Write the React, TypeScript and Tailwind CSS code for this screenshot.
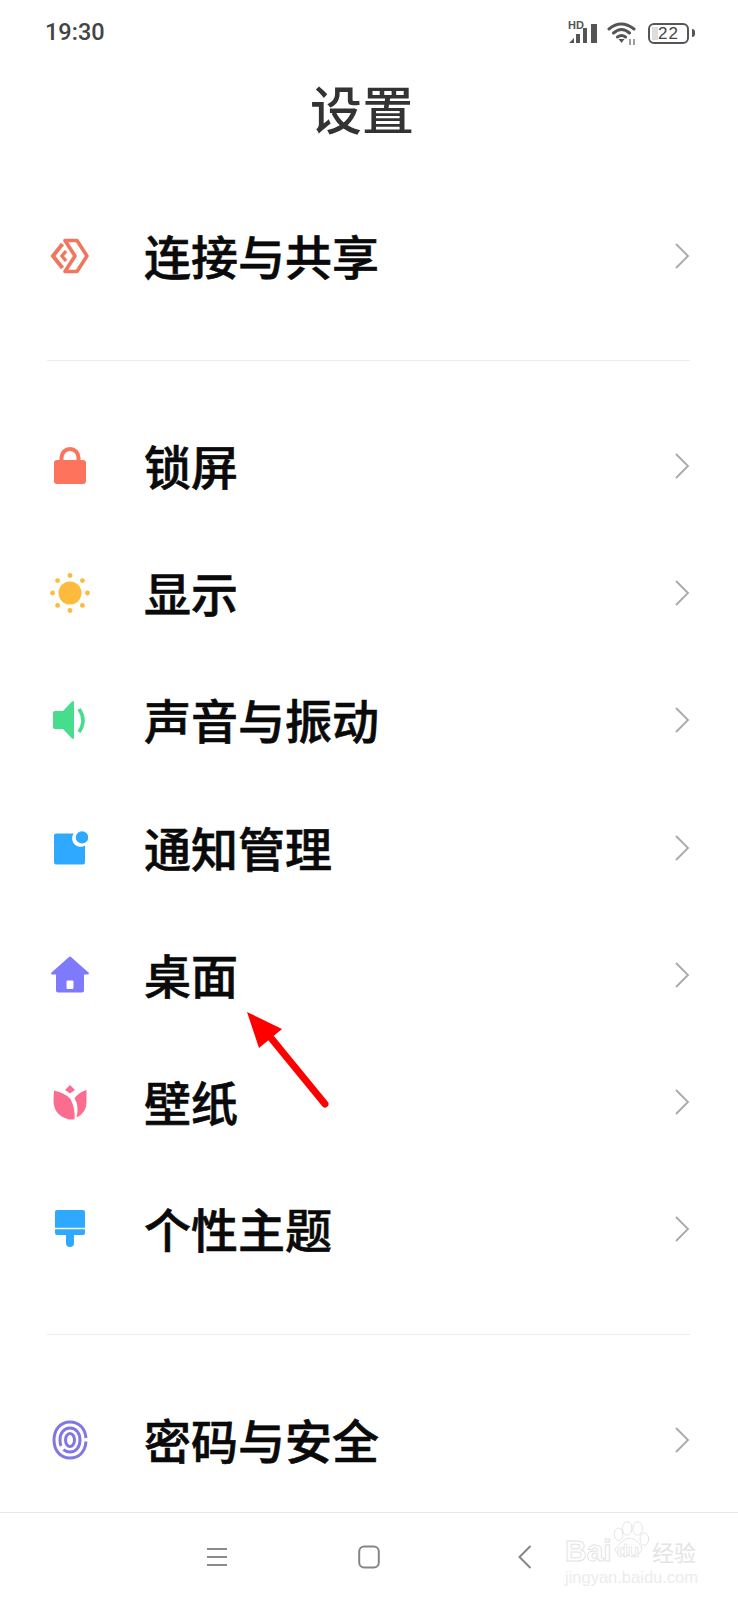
import type { ReactNode } from 'react';

const CJK = "font-['Noto_Sans_CJK_SC','Noto_Sans',sans-serif]";

function Chevron() {
  return (
    <svg width="16" height="28" viewBox="0 0 16 28" fill="none" className="shrink-0">
      <path d="M2 2 L14 14 L2 26" stroke="#a9a9a9" strokeWidth="1.8" />
    </svg>
  );
}

function Row({ icon, label }: { icon: ReactNode; label: string }) {
  return (
    <div className="flex items-center h-[127.2px] pl-[48px] pr-[48px]">
      <div className="w-[44px] h-[44px] flex items-center justify-center shrink-0">{icon}</div>
      <div className="ml-[52px] pb-[3px] flex-1 text-[47px] leading-none font-medium text-[#0a0a0a] [-webkit-text-stroke:0.6px_#0a0a0a]">{label}</div>
      <Chevron />
    </div>
  );
}

const ConnectIcon = (
  <svg width="40" height="36" viewBox="0 0 40 36" fill="none">
    <path d="M15 2.5 H27 L37 18 L27 33.5 H15 L25 18 Z" stroke="#f0775f" strokeWidth="3.6" strokeLinejoin="round" />
    <path d="M12.5 6 L3 18 L12.5 30" stroke="#f0775f" strokeWidth="4" />
    <path d="M16 13 L12 18 L16 23" stroke="#f0775f" strokeWidth="3.4" />
  </svg>
);

const LockIcon = (
  <svg width="34" height="38" viewBox="0 0 34 38" fill="none">
    <path d="M8.5 16 V10.5 a8.5 8.5 0 0 1 17 0 V16" stroke="#fd735c" strokeWidth="4" />
    <rect x="1" y="13" width="32" height="24" rx="3" fill="#fd735c" />
  </svg>
);

const SunIcon = (
  <svg width="40" height="40" viewBox="0 0 40 40" fill="#fcbb3c">
    <circle cx="20" cy="20" r="11.5" />
    <circle cx="20" cy="2.5" r="2.4" />
    <circle cx="20" cy="37.5" r="2.4" />
    <circle cx="2.5" cy="20" r="2.4" />
    <circle cx="37.5" cy="20" r="2.4" />
    <circle cx="7.6" cy="7.6" r="2.4" />
    <circle cx="32.4" cy="7.6" r="2.4" />
    <circle cx="7.6" cy="32.4" r="2.4" />
    <circle cx="32.4" cy="32.4" r="2.4" />
  </svg>
);

const SoundIcon = (
  <svg width="36" height="40" viewBox="0 0 36 40" fill="none">
    <path d="M3 11 H11 L20 1.5 Q22 0 22 3 V37 Q22 40 20 38.5 L11 29 H3 Q1 29 1 27 V13 Q1 11 3 11 Z" fill="#46de8d" />
    <path d="M27 9 Q35 20 27 32" stroke="#46de8d" strokeWidth="3.6" />
  </svg>
);

const NoticeIcon = (
  <svg width="36" height="36" viewBox="0 0 36 36">
    <path d="M4 3.5 H21.6 A8.5 8.5 0 0 0 33 15.6 V32 Q33 34.5 31 34.5 H4 Q2 34.5 2 32 V5.5 Q2 3.5 4 3.5 Z" fill="#2fa9ff" />
    <circle cx="30" cy="7.4" r="6.2" fill="#2fa9ff" />
  </svg>
);

const HomeIcon = (
  <svg width="38" height="38" viewBox="0 0 38 38">
    <path fillRule="evenodd" d="M18 1 Q19 0 20 1 L38 17 Q38 18.5 36.5 18.5 H33 V34.5 Q33 36.5 31 36.5 H7 Q5 36.5 5 34.5 V18.5 H1.5 Q0 18.5 0 17 Z M16.5 24.5 Q15.5 24.5 15.5 25.5 V32 Q15.5 33 16.5 33 H21.5 Q22.5 33 22.5 32 V25.5 Q22.5 24.5 21.5 24.5 Z" fill="#7f79fb" />
  </svg>
);

const TulipIcon = (
  <svg width="36" height="36" viewBox="0 0 36 36">
    <path d="M18 1 L23 6 L18 9.5 L13 6 Z" fill="#fb6d8f" />
    <path d="M2 6.5 Q13.5 9 18.5 15 Q23.5 25 22.5 35 Q19.5 36 15.5 35 Q1.5 31 1.5 16 Z" fill="#fb6d8f" />
    <path d="M34.5 6 V18 Q34.5 29 24.5 33.5 Q27.5 23 22.5 14 Q27.5 8 34.5 6 Z" fill="#fb6d8f" />
  </svg>
);

const BrushIcon = (
  <svg width="32" height="38" viewBox="0 0 32 38">
    <path d="M3 0 H29 Q31 0 31 2 V17.8 H1 V2 Q1 0 3 0 Z" fill="#2fa9ff" />
    <path d="M1 19.2 H31 V23 Q31 25 29 25 H20 V33 A4 4 0 0 1 12 33 V25 H3 Q1 25 1 23 Z" fill="#2fa9ff" />
  </svg>
);

const FingerprintIcon = (
  <svg width="36" height="40" viewBox="0 0 36 40" fill="none" stroke="#8077e4" strokeWidth="3">
    <path d="M34 18 C33 8 27 2 18 2 C8 2 2 10 2 20 C2 30 8 38 18 38 C27 38 33 32 34 21.5" />
    <path d="M9 26 C8 24 8 22 8 20 C8 13 12 8 18 8 C24 8 28 13 28 20 C28 27 24 32 18 32 C15.5 32 13 31 11.5 29.5" />
    <ellipse cx="18" cy="20" rx="4.5" ry="6.5" />
  </svg>
);

function StatusIcons() {
  return (
    <div className="flex items-center">
      <div className="relative w-[30px] h-[22px]">
        <span className="absolute left-0 top-[-2px] text-[11px] leading-[11px] font-bold text-[#555] font-['Liberation_Sans',sans-serif]">HD</span>
        <svg width="30" height="22" viewBox="0 0 30 22" className="absolute left-0 top-0">
          <path d="M1 21 L6 16 V21 Z M8 21 V12 H12 V21 Z M15 21 V6 H19 V21 Z M23 21 V2 H29 V21 Z" fill="#555" />
        </svg>
      </div>
      <svg width="30" height="24" viewBox="0 0 30 24" fill="none" className="ml-[9px]">
        <path d="M2 8 Q14 -2 27 8 M6.5 12 Q14.5 5 22.5 12 M10.5 16 Q14.5 13 18.5 16" stroke="#555" strokeWidth="3" strokeLinecap="round" />
        <path d="M11.5 18 H17.5 L14.5 22 Z" fill="#555" />
        <path d="M23 18 V24 M27 18 V24" stroke="#777" strokeWidth="1.4" />
      </svg>
      <div className="ml-[11px] relative w-[41px] h-[21px] shrink-0 border-[2.5px] border-[#555] rounded-[6px] flex items-center justify-center text-[17px] leading-none text-[#444] font-['Liberation_Sans',sans-serif]">
        <span className="absolute left-[2px] top-[2px] bottom-[2px] w-[6px] bg-[#ddd]" />
        <span className="relative tracking-[1px]">22</span>
      </div>
      <div className="ml-[3px] w-[3px] h-[8px] rounded-r-sm bg-[#555]" />
    </div>
  );
}

function Watermark() {
  return (
    <div className="absolute left-[565px] top-[1518px] w-[135px] h-[70px] font-['Liberation_Sans',sans-serif]">
      <svg width="42" height="38" viewBox="0 0 44 38" fill="none" stroke="#e2e2e2" strokeWidth="1" className="absolute left-[44px] top-[2px]">
        <ellipse cx="10" cy="14" rx="4.5" ry="6.5" />
        <ellipse cx="19" cy="8" rx="5" ry="7" />
        <ellipse cx="30" cy="8" rx="5" ry="7" />
        <ellipse cx="37" cy="19" rx="4.5" ry="6.5" />
        <path d="M6 30 Q11 23 16 20 Q24 15 31 23 Q37 29 32 34 Q24 38 14 35 Q8 35 6 30 Z" fill="#ffffff" />
      </svg>
      <span className="absolute left-0 top-[18px] text-[30px] leading-[30px] font-bold text-white [-webkit-text-stroke:1px_#e4e4e4]">Bai</span>
      <span className="absolute left-[52px] top-[24px] text-[18px] leading-[18px] font-bold text-white [-webkit-text-stroke:0.7px_#e2e2e2]">du</span>
      <span className={`absolute left-[87px] top-[21px] text-[22px] leading-[24px] whitespace-nowrap text-[#e4e4e4] ${CJK}`}>经验</span>
      <span className="absolute left-0 top-[49px] text-[16.5px] leading-[20px] whitespace-nowrap text-[#ececec]">jingyan.baidu.com</span>
    </div>
  );
}

export default function App() {
  return (
    <div className={`relative w-[738px] h-[1600px] overflow-hidden bg-white flex flex-col ${CJK}`}>
      <div className="h-[66px] flex items-center justify-between pl-[45px] pr-[43px] shrink-0">
        <span className="text-[23.5px] leading-none font-medium text-[#444] font-['Roboto',sans-serif]">19:30</span>
        <StatusIcons />
      </div>
      <div className="h-[84px] pr-[14px] flex items-center justify-center text-[52px] leading-none font-medium text-[#333] shrink-0">设置</div>
      <div className="h-[42px] shrink-0" />

      <Row icon={ConnectIcon} label="连接与共享" />
      <div className="ml-[47px] mr-[48px] mt-[41px] border-t border-[#ececec]" />
      <div className="h-[41.2px] shrink-0" />

      <Row icon={LockIcon} label="锁屏" />
      <Row icon={SunIcon} label="显示" />
      <Row icon={SoundIcon} label="声音与振动" />
      <Row icon={NoticeIcon} label="通知管理" />
      <Row icon={HomeIcon} label="桌面" />
      <Row icon={TulipIcon} label="壁纸" />
      <Row icon={BrushIcon} label="个性主题" />
      <div className="ml-[47px] mr-[48px] mt-[41px] border-t border-[#ececec]" />
      <div className="h-[41.4px] shrink-0" />

      <Row icon={FingerprintIcon} label="密码与安全" />

      <div className="mt-auto h-[88px] border-t border-[#e8e8e8] flex items-start shrink-0">
        <svg width="20" height="20" viewBox="0 0 20 20" fill="none" className="ml-[207px] mt-[34px]">
          <path d="M0 2 H20 M0 10 H20 M0 18 H20" stroke="#8a8a8a" strokeWidth="1.8" />
        </svg>
        <svg width="22" height="24" viewBox="0 0 22 24" fill="none" className="ml-[131px] mt-[32px]">
          <rect x="1.2" y="1.5" width="19.6" height="21" rx="5" stroke="#858585" strokeWidth="2" />
        </svg>
        <svg width="14" height="24" viewBox="0 0 14 24" fill="none" className="ml-[138px] mt-[32px]">
          <path d="M12.5 1 L1.5 12 L12.5 23" stroke="#858585" strokeWidth="2" />
        </svg>
      </div>

      <svg width="90" height="100" viewBox="0 0 90 100" fill="none" className="absolute left-[240px] top-[1008px]">
        <path d="M7 4 L42 21 L19 40 Z" fill="#fe0000" />
        <path d="M31 30 L85 96" stroke="#fe0000" strokeWidth="7" strokeLinecap="round" />
      </svg>

      <Watermark />
    </div>
  );
}
